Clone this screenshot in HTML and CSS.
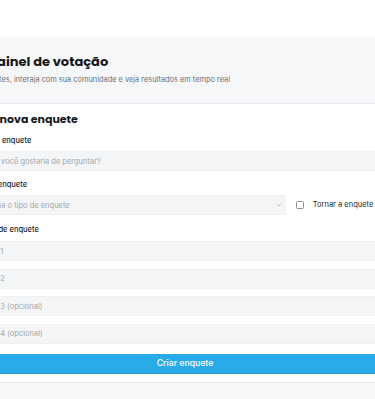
FILE: index.html
```html
<!DOCTYPE html>
<html lang="pt-BR">
<head>
    <meta charset="UTF-8">
    <meta name="viewport" content="width=device-width, initial-scale=1.0">
    <title>Seu painel de votação</title>
    <link rel="stylesheet" href="styles.css">
</head>
<body>

    <div class="page">
        <div class="dashboard-header">
            <h1>Seu painel de votação</h1>
            <p>Crie enquetes, interaja com sua comunidade e veja resultados em tempo real</p>
        </div>

        <div class="poll-card">
            <h2>Criar nova enquete</h2>
            <form class="poll-form">
                <label for="title">Título da enquete</label>
                <input type="text" id="title" placeholder="O que você gostaria de perguntar?">

                <label for="type">Tipo de enquete</label>
                <div class="type-row">
                    <div class="select-wrap">
                        <select id="type">
                            <option>Escolha o tipo de enquete</option>
                        </select>
                        <svg class="chevron" width="6" height="4" viewBox="0 0 6 4"><path d="M1 1l2 2 2-2" fill="none" stroke="#b5b9be" stroke-width="0.9"/></svg>
                    </div>
                    <label class="public-check"><span class="box"></span>Tornar a enquete pública</label>
                </div>

                <label class="options-label">Opções de enquete</label>
                <div class="options">
                    <input type="text" placeholder="Opção 1">
                    <input type="text" placeholder="Opção 2">
                    <input type="text" placeholder="Opção 3 (opcional)">
                    <input type="text" placeholder="Opção 4 (opcional)">
                </div>

                <button type="submit">Criar enquete</button>
            </form>
        </div>

        <div class="poll-list"></div>
    </div>

</body>
</html>
```

FILE: styles.css
```css
body {
    margin: 0;
    font-family: Inter, "Noto Sans", sans-serif;
    background: #fff;
    display: flex;
    justify-content: center;
    overflow: hidden;
}

.page {
    flex: 0 0 446px;
    margin-right: 5px;
    padding-top: 37px;
}

.dashboard-header {
    background-color: #f6f7f9;
    border-bottom: 1px solid #e8eaed;
    padding: 15px 0 18px;
}

.dashboard-header h1 {
    font-family: Poppins, "Noto Sans", sans-serif;
    font-size: 13px;
    font-weight: 700;
    line-height: 20px;
    margin: 0;
    color: #16181b;
}

.dashboard-header p {
    font-size: 7.4px;
    line-height: 10px;
    color: #6b6f75;
    margin: 3px 0 0;
}

.poll-card {
    background-color: #fff;
    padding: 8px;
    border-bottom: 1px solid #e6e8eb;
}

.poll-card h2 {
    font-family: Poppins, "Noto Sans", sans-serif;
    font-size: 11px;
    font-weight: 700;
    line-height: 14px;
    margin: 0 0 10px;
    color: #16181b;
}

.poll-form {
    display: flex;
    flex-direction: column;
}

.poll-form > label {
    font-size: 7.5px;
    line-height: 10px;
    font-weight: 500;
    color: #25282c;
    margin-bottom: 5px;
}

.poll-form > label.options-label {
    margin-bottom: 6px;
}

.poll-form input,
.poll-form select {
    font-family: inherit;
    font-size: 7.5px;
    height: 20px;
    box-sizing: border-box;
    padding: 0 8px;
    border: 1px solid #eef0f2;
    border-radius: 2px;
    background-color: #f4f5f7;
    color: #25282c;
    outline: none;
}

.poll-form input::placeholder {
    color: #a3a7ad;
}

.poll-form > input {
    margin-bottom: 9px;
}

.type-row {
    display: flex;
    align-items: center;
    gap: 10px;
    margin-bottom: 10px;
}

.select-wrap {
    position: relative;
    width: 317px;
    height: 20px;
}

.select-wrap select {
    display: block;
    width: 100%;
    appearance: none;
    color: #a3a7ad;
}

.chevron {
    position: absolute;
    right: 4px;
    top: 8px;
}

.public-check {
    display: flex;
    align-items: center;
    gap: 9px;
    font-size: 7.5px;
    line-height: 10px;
    color: #25282c;
    white-space: nowrap;
}

.public-check .box {
    width: 6px;
    height: 6px;
    border: 1px solid #8d9197;
    border-radius: 1.5px;
}

.options {
    display: flex;
    flex-direction: column;
    gap: 7.5px;
}

.options input {
    padding-left: 5px;
}

.poll-form button {
    margin-top: 10px;
    height: 20px;
    border: none;
    border-bottom: 1px solid #1f95cf;
    border-radius: 2px;
    background-color: #2aabe9;
    color: #fff;
    font-family: inherit;
    font-size: 8.7px;
    font-weight: 500;
    cursor: pointer;
}

.poll-list {
    background-color: #f6f7f9;
    height: 40px;
}
```
